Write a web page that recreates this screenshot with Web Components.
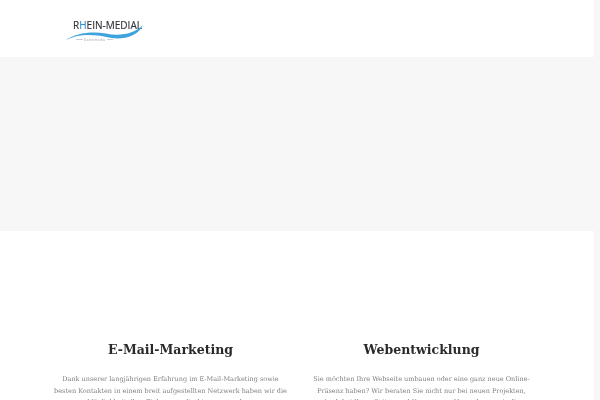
<!DOCTYPE html>
<html lang="de">
<head>
<meta charset="utf-8">
<title>Rhein-Medial</title>
<style>
  html, body { margin: 0; height: 400px; overflow: hidden; background: #f7f7f7; }
</style>
</head>
<body>
<site-page>
  <site-header></site-header>
  <hero-band></hero-band>
  <service-row>
    <service-card heading="E-Mail-Marketing">
      Dank unserer langjährigen Erfahrung im E-Mail-Marketing sowie besten Kontakten in einem breit aufgestellten Netzwerk haben wir die Möglichkeit, Ihre Zielgruppe direkt anzusprechen.
    </service-card>
    <service-card heading="Webentwicklung">
      Sie möchten Ihre Webseite umbauen oder eine ganz neue Online-Präsenz haben? Wir beraten Sie nicht nur bei neuen Projekten,<br>
      Auch bei Ihren Seiten und Kampagnen übernehmen wir die Entwicklung.
    </service-card>
  </service-row>
</site-page>

<script>
class SitePage extends HTMLElement {
  connectedCallback() {
    this.attachShadow({ mode: 'open' });
    this.shadowRoot.innerHTML = `
      <style>
        :host { display: block; width: 594px; height: 400px; background: white; }
      </style>
      <slot></slot>
    `;
  }
}

class SiteHeader extends HTMLElement {
  connectedCallback() {
    this.attachShadow({ mode: 'open' });
    this.shadowRoot.innerHTML = `
      <style>
        :host { display: flex; align-items: center; height: 57px; padding-left: 64px; background: white; box-sizing: border-box; }
        .logo { display: block; filter: blur(.35px); }
        .name { font: 500 11px "Open Sans", sans-serif; fill: #2e3036; stroke: #2e3036; stroke-width: .15px; }
        .tag { font: 3px "Liberation Sans", sans-serif; fill: #9a9fa4; }
      </style>
      <svg class="logo" width="90" height="30" viewBox="0 0 90 30">
        <text class="name" x="9" y="14.5" textLength="69" lengthAdjust="spacingAndGlyphs">R<tspan fill="#2f8fd0" stroke="#2f8fd0">H</tspan>EIN-MEDIAL</text>
        <path d="M1 27 C12 18.5 28 17.5 42 19.5 C56 22.5 70 20 79 11 C73 24 56 26.5 42 23 C28 20 12 20 1 27Z" fill="#3fa3dd"/>
        <path d="M12 25.5 h7 M43 25.5 h6" stroke="#a8aeb2" stroke-width=".6"/>
        <text class="tag" x="20" y="26.5" textLength="21">Datenmedia</text>
      </svg>
    `;
  }
}

class HeroBand extends HTMLElement {
  connectedCallback() {
    this.attachShadow({ mode: 'open' });
    this.shadowRoot.innerHTML = `
      <style>
        :host { display: block; height: 174px; width: 600px; background: #f7f7f7; }
      </style>
    `;
  }
}

class ServiceRow extends HTMLElement {
  connectedCallback() {
    this.attachShadow({ mode: 'open' });
    this.shadowRoot.innerHTML = `
      <style>
        :host { display: grid; grid-template-columns: 251px 251px; justify-content: start; padding: 111px 0 0 45px; }
      </style>
      <slot></slot>
    `;
  }
}

class ServiceCard extends HTMLElement {
  connectedCallback() {
    this.attachShadow({ mode: 'open' });
    this.shadowRoot.innerHTML = `
      <style>
        :host { display: block; text-align: center; font-family: "DejaVu Serif", serif; padding: 0 8px; filter: blur(.3px); }
        h2 { margin: 0 0 16px; font-size: 12.5px; line-height: 16px; font-weight: bold; color: #2a2a2a; }
        p { margin: 0; font-size: 6.5px; line-height: 11.5px; color: #808080; }
      </style>
      <h2>${this.getAttribute('heading')}</h2>
      <p><slot></slot></p>
    `;
  }
}

customElements.define('site-page', SitePage);
customElements.define('site-header', SiteHeader);
customElements.define('hero-band', HeroBand);
customElements.define('service-row', ServiceRow);
customElements.define('service-card', ServiceCard);
</script>
</body>
</html>
